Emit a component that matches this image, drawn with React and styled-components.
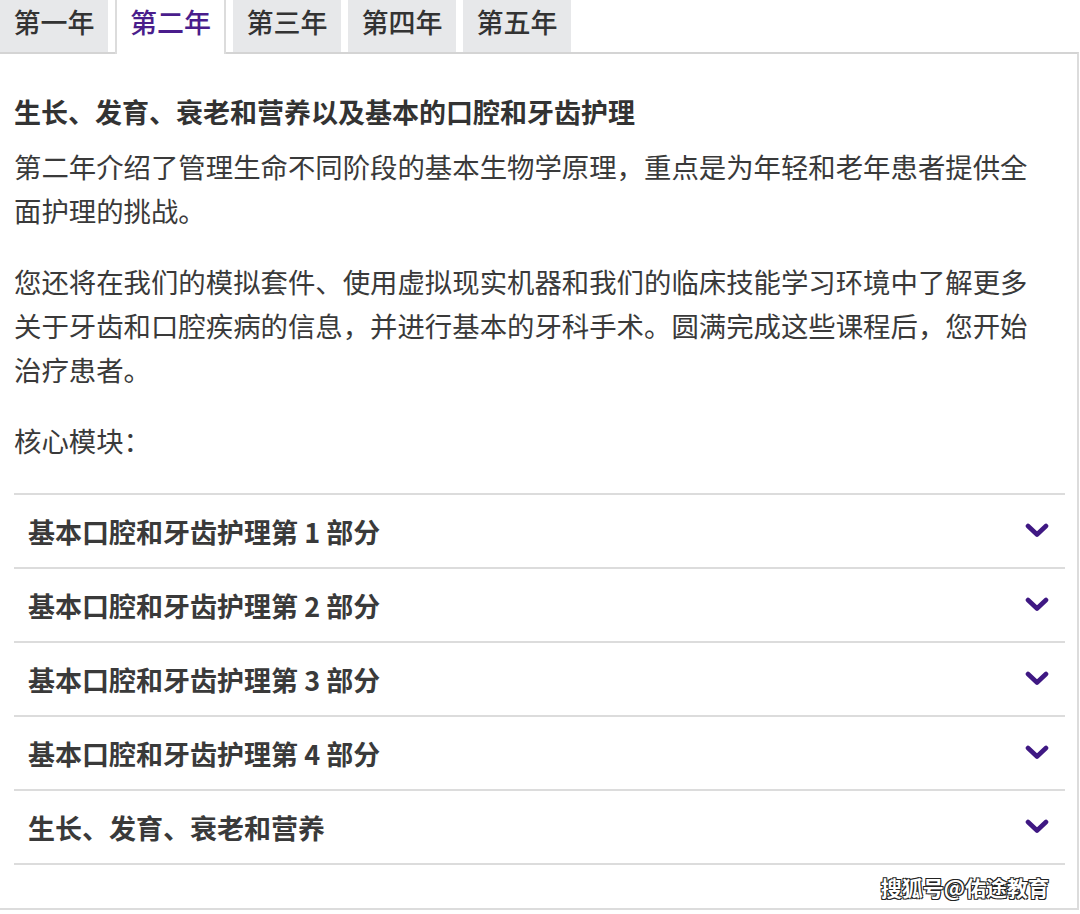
import React from 'react';
import styled, { createGlobalStyle } from 'styled-components';

const GlobalStyle = createGlobalStyle`
  body {
    margin: 0;
    background: #fff;
    font-family: "Noto Sans CJK SC", "Noto Sans", sans-serif;
    color: #3a3a3a;
  }
`;

const years = ['第一年', '第二年', '第三年', '第四年', '第五年'];
const modules = [
  '基本口腔和牙齿护理第 1 部分',
  '基本口腔和牙齿护理第 2 部分',
  '基本口腔和牙齿护理第 3 部分',
  '基本口腔和牙齿护理第 4 部分',
  '生长、发育、衰老和营养',
];

function Chevron() {
  return (
    <svg width="24" height="16" viewBox="0 0 24 16">
      <path d="M3 3 L12 11.5 L21 3" fill="none" stroke="#3f1883" strokeWidth="4.6" strokeLinecap="round" strokeLinejoin="round" />
    </svg>
  );
}

export default function App() {
  return (
    <Page>
      <GlobalStyle />
      <TabBar>
        {years.map((y, i) => (
          <Tab key={y} active={i === 1}>{y}</Tab>
        ))}
      </TabBar>
      <Panel>
        <Heading>生长、发育、衰老和营养以及基本的口腔和牙齿护理</Heading>
        <Para>第二年介绍了管理生命不同阶段的基本生物学原理，重点是为年轻和老年患者提供全面护理的挑战。</Para>
        <Para>您还将在我们的模拟套件、使用虚拟现实机器和我们的临床技能学习环境中了解更多关于牙齿和口腔疾病的信息，并进行基本的牙科手术。圆满完成这些课程后，您开始治疗患者。</Para>
        <Para>核心模块：</Para>
        <Accordion>
          {modules.map((m) => (
            <Row key={m}>
              <RowTitle>{m}</RowTitle>
              <Chevron />
            </Row>
          ))}
        </Accordion>
        <Footer>
          <Watermark>搜狐号@佑途教育</Watermark>
        </Footer>
      </Panel>
    </Page>
  );
}

const Page = styled.div`
  width: 1080px;
  height: 914px;
  overflow: hidden;
`;

const TabBar = styled.div`
  display: flex;
  gap: 7px;
  height: 52px;
  position: relative;
  z-index: 1;
`;

const Tab = styled.div`
  width: ${p => (p.active ? '111px' : '108px')};
  height: ${p => (p.active ? '54px' : '52px')};
  box-sizing: border-box;
  text-align: center;
  line-height: 44px;
  font-size: 27px;
  font-weight: 500;
  background: ${p => (p.active ? '#fff' : '#e7e8ea')};
  color: ${p => (p.active ? '#4a1d8c' : '#333')};
  border-left: ${p => (p.active ? '2px solid #dcdcdc' : 'none')};
  border-right: ${p => (p.active ? '2px solid #dcdcdc' : 'none')};
`;

const Panel = styled.div`
  border-top: 2px solid #d4d4d4;
  border-right: 2px solid #dcdcdc;
  border-bottom: 2px solid #dcdcdc;
  margin-right: 1px;
  height: 858px;
  box-sizing: border-box;
  padding: 36px 12px 0 14px;
  display: flex;
  flex-direction: column;
`;

const Heading = styled.h3`
  margin: 0 0 10px;
  font-size: 27px;
  line-height: 44px;
  font-weight: 700;
  color: #333;
`;

const Para = styled.p`
  margin: 0 0 27px;
  padding-right: 22px;
  font-size: 27.4px;
  line-height: 44px;
  color: #3a3a3a;
  &:last-of-type { margin-bottom: 31px; }
`;

const Accordion = styled.div`
  border-top: 2px solid #dcdcdc;
`;

const Row = styled.div`
  height: 74px;
  box-sizing: border-box;
  border-bottom: 2px solid #dcdcdc;
  display: flex;
  align-items: center;
  justify-content: space-between;
  padding: 0 16px 0 14px;
`;

const RowTitle = styled.span`
  font-size: 27px;
  font-weight: 700;
  color: #3a3a3a;
`;

const Footer = styled.div`
  flex: 1;
  display: flex;
  justify-content: flex-end;
  align-items: center;
  padding-right: 16px;
`;

const Watermark = styled.span`
  font-size: 21px;
  font-weight: 700;
  color: #fff;
  text-shadow: 1px 1px 0 #222, -1px -1px 0 #222, 1px -1px 0 #222, -1px 1px 0 #222;
`;
